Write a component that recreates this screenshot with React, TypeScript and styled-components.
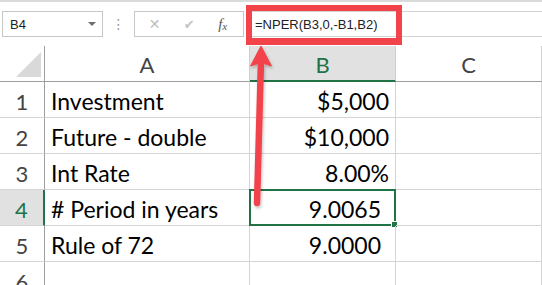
import styled, { createGlobalStyle } from 'styled-components'
import { FC } from 'react'

const GlobalStyle = createGlobalStyle`
  html, body {
    margin: 0;
    padding: 0;
    background: #ffffff;
    overflow: hidden;
  }
  body {
    font-family: 'Liberation Sans', Arial, sans-serif;
  }
`

type Row = {
  n: number
  label: string
  value: string
  pad?: number
}

const rows: Row[] = [
  { n: 1, label: 'Investment', value: '$5,000' },
  { n: 2, label: 'Future - double', value: '$10,000' },
  { n: 3, label: 'Int Rate', value: '8.00%' },
  { n: 4, label: '# Period in years', value: '9.0065', pad: 14 },
  { n: 5, label: 'Rule of 72', value: '9.0000', pad: 14 },
]

const selectedRow = 4

const App: FC = () => {
  return (
    <Page>
      <GlobalStyle />
      <Toolbar>
        <NameBox>
          <span>B4</span>
          <Caret />
        </NameBox>
        <Grip>⋮</Grip>
        <FxButtons>
          <ToolGlyph>✕</ToolGlyph>
          <ToolGlyph $bold>✔</ToolGlyph>
          <FxGlyph>
            f<sub>x</sub>
          </FxGlyph>
        </FxButtons>
        <FormulaField>=NPER(B3,0,-B1,B2)</FormulaField>
        <Highlight />
      </Toolbar>

      <Sheet>
        <Corner>
          <CornerTriangle />
        </Corner>
        <ColHeader>A</ColHeader>
        <ColHeader $active>B</ColHeader>
        <ColHeader>C</ColHeader>

        {rows.map((r) => (
          <RowGroup key={r.n} r={r} />
        ))}

        <RowHeader>6</RowHeader>
        <Cell />
        <Cell />
        <Cell />
      </Sheet>

      <ArrowLayer width="542" height="285" viewBox="0 0 542 285">
        <defs>
          <filter id="sh" x="-50%" y="-10%" width="200%" height="120%">
            <feDropShadow dx="1" dy="2" stdDeviation="1.5" floodColor="#000" floodOpacity="0.25" />
          </filter>
        </defs>
        <g filter="url(#sh)" fill="#f2434b" stroke="#f2434b">
          <line x1="257" y1="203" x2="261" y2="60" strokeWidth="6.5" strokeLinecap="round" />
          <path d="M261 46 L271.5 66 L261 62.5 L250.5 66 Z" strokeWidth="1" strokeLinejoin="round" />
        </g>
      </ArrowLayer>
    </Page>
  )
}

const RowGroup: FC<{ r: Row }> = ({ r }) => {
  const active = r.n === selectedRow
  return (
    <>
      <RowHeader $active={active}>{r.n}</RowHeader>
      <Cell>{r.label}</Cell>
      <Cell $right $pad={r.pad}>
        {r.value}
        {active && (
          <Selection>
            <FillHandle />
          </Selection>
        )}
      </Cell>
      <Cell />
    </>
  )
}

export default App

const Page = styled.div`
  position: relative;
  width: 542px;
  height: 285px;
  overflow: hidden;
  background: #fff;
`

const Toolbar = styled.div`
  position: relative;
  height: 46px;
  display: flex;
  align-items: center;
  padding-left: 2px;
  box-sizing: border-box;
  border-top: 2px solid #dadada;
  background: #fff;
`

const NameBox = styled.div`
  width: 101px;
  height: 26px;
  box-sizing: border-box;
  border: 1px solid #c6c6c6;
  display: flex;
  align-items: center;
  justify-content: space-between;
  padding: 0 6px 0 7px;
  font-size: 13px;
  color: #222;
`

const Caret = styled.div`
  width: 0;
  height: 0;
  border-left: 4px solid transparent;
  border-right: 4px solid transparent;
  border-top: 4px solid #6d6d6d;
`

const Grip = styled.div`
  width: 31px;
  text-align: center;
  color: #9a9a9a;
  font-size: 14px;
  font-family: 'DejaVu Sans', sans-serif;
`

const FxButtons = styled.div`
  width: 110px;
  height: 26px;
  box-sizing: border-box;
  border: 1px solid #c6c6c6;
  display: flex;
  align-items: center;
  justify-content: space-around;
  padding: 0 4px 0 2px;
`

const ToolGlyph = styled.span<{ $bold?: boolean }>`
  color: ${(p) => (p.$bold ? '#c4c4c4' : '#bcbcbc')};
  font-size: ${(p) => (p.$bold ? 13 : 14)}px;
  font-family: 'DejaVu Sans', sans-serif;
`

const FxGlyph = styled.span`
  color: #555;
  font-family: 'Liberation Serif', 'Times New Roman', serif;
  font-style: italic;
  font-size: 15px;
  sub {
    font-size: 11px;
    vertical-align: -1px;
  }
`

const FormulaField = styled.div`
  flex: 1;
  height: 26px;
  margin-left: 3px;
  box-sizing: border-box;
  border-top: 1px solid #d2d2d2;
  border-bottom: 1px solid #d2d2d2;
  display: flex;
  align-items: center;
  padding-left: 8px;
  font-size: 13px;
  color: #222;
`

const Highlight = styled.div`
  position: absolute;
  left: 246px;
  top: 3px;
  width: 156px;
  height: 40px;
  box-sizing: border-box;
  border: 6px solid #f2434b;
  border-bottom-width: 7px;
`

const Sheet = styled.div`
  display: grid;
  grid-template-columns: 45px 205px 146px 146px;
  grid-template-rows: 36px;
  grid-auto-rows: 36px;
  font-family: Lato, 'Open Sans', sans-serif;
`

const Corner = styled.div`
  position: relative;
  box-sizing: border-box;
  border-right: 1px solid #9f9f9f;
  border-bottom: 1px solid #9f9f9f;
`

const CornerTriangle = styled.div`
  position: absolute;
  right: 3px;
  bottom: 4px;
  width: 0;
  height: 0;
  border-left: 25px solid transparent;
  border-bottom: 25px solid #d9d9d9;
`

const ColHeader = styled.div<{ $active?: boolean }>`
  box-sizing: border-box;
  display: flex;
  align-items: center;
  justify-content: center;
  padding-top: 2px;
  font-size: 22px;
  color: ${(p) => (p.$active ? '#217346' : '#444')};
  background: ${(p) => (p.$active ? '#e1e1e1' : '#fff')};
  border-right: 1px solid #cfcfcf;
  border-bottom: ${(p) => (p.$active ? '2px solid #217346' : '1px solid #9f9f9f')};
`

const RowHeader = styled.div<{ $active?: boolean }>`
  box-sizing: border-box;
  display: flex;
  align-items: center;
  justify-content: center;
  padding-top: 3px;
  font-size: 22px;
  color: ${(p) => (p.$active ? '#217346' : '#444')};
  background: ${(p) => (p.$active ? '#e1e1e1' : '#fff')};
  border-right: ${(p) => (p.$active ? '2px solid #217346' : '1px solid #9f9f9f')};
  border-bottom: 1px solid #d4d4d4;
`

const Cell = styled.div<{ $right?: boolean; $pad?: number }>`
  position: relative;
  box-sizing: border-box;
  display: flex;
  align-items: center;
  justify-content: ${(p) => (p.$right ? 'flex-end' : 'flex-start')};
  padding: 3px ${(p) => (p.$right ? p.$pad ?? 6 : 6)}px 0 6px;
  font-size: 23px;
  color: #000;
  white-space: nowrap;
  border-right: 1px solid #d4d4d4;
  border-bottom: 1px solid #d4d4d4;
`

const Selection = styled.div`
  position: absolute;
  left: -1px;
  top: -1px;
  right: -1px;
  bottom: -1px;
  border: 2px solid #217346;
`

const FillHandle = styled.div`
  position: absolute;
  right: -4px;
  bottom: -4px;
  width: 5px;
  height: 5px;
  background: #217346;
  border: 1px solid #fff;
`

const ArrowLayer = styled.svg`
  position: absolute;
  left: 0;
  top: 0;
  pointer-events: none;
`
